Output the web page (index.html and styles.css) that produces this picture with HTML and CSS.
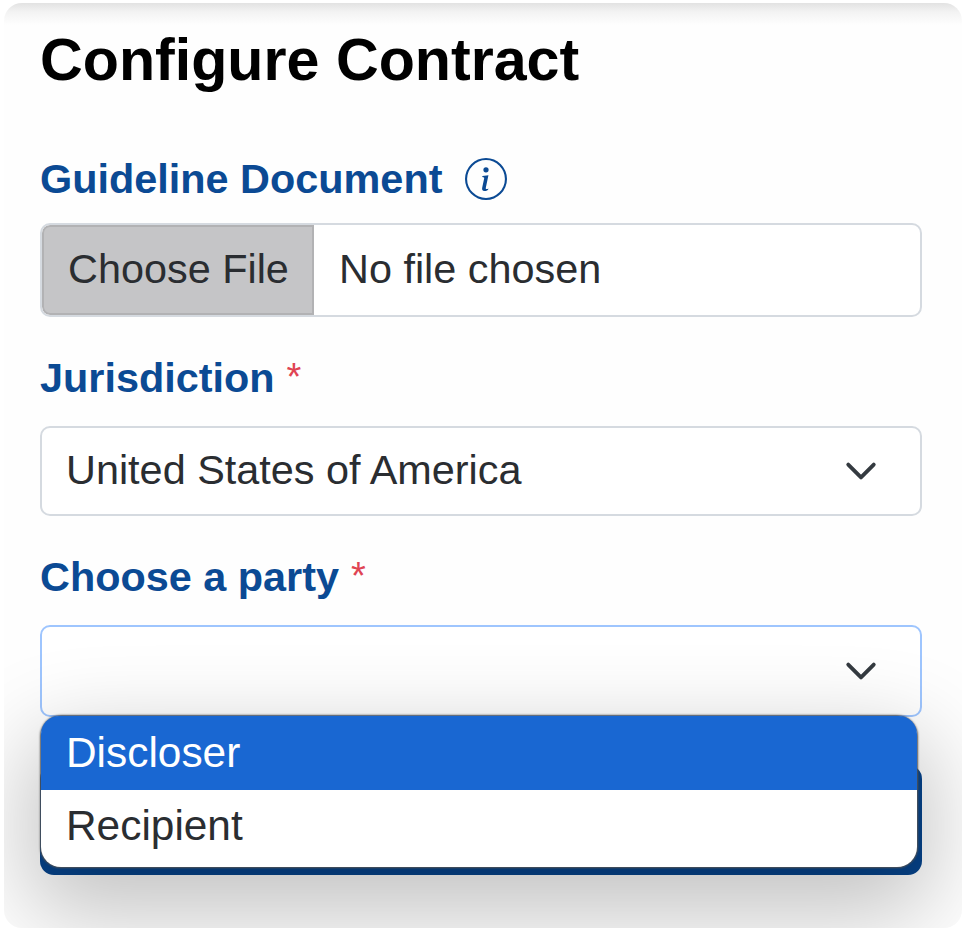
FILE: index.html
```html
<!DOCTYPE html>
<html lang="en">
<head>
    <meta charset="UTF-8">
    <title>Configure Contract</title>
    <link rel="stylesheet" href="styles.css">
</head>
<body>
    <div class="card">
        <h1 class="title">Configure Contract</h1>

        <div class="label">
            <span>Guideline Document</span>
            <svg class="info" viewBox="0 0 16 16" fill="currentColor">
                <path d="M8 15.200A7.200 7.200 0 1 1 8 .8a7.200 7.200 0 0 1 0 14.400m0 .8A8 8 0 1 0 8 0a8 8 0 0 0 0 16"/>
                <path d="m8.930 6.588-2.290.287-.082.380.450.083c.294.070.352.176.288.469l-.738 3.468c-.194.897.105 1.319.808 1.319.545 0 1.178-.252 1.465-.598l.088-.416c-.200.176-.492.246-.686.246-.275 0-.375-.193-.304-.533zM9 4.500a1 1 0 1 1-2 0 1 1 0 0 1 2 0"/>
            </svg>
        </div>
        <div class="field file">
            <span class="file-button">Choose File</span>
            <span class="file-name">No file chosen</span>
        </div>

        <div class="label"><span>Jurisdiction</span><span class="required">*</span></div>
        <div class="field select">
            <span class="value">United States of America</span>
            <svg class="chevron" viewBox="0 0 16 16"><path d="m2 5 6 6 6-6"/></svg>
        </div>

        <div class="label"><span>Choose a party</span><span class="required">*</span></div>
        <div class="field select open">
            <span class="value"></span>
            <svg class="chevron" viewBox="0 0 16 16"><path d="m2 5 6 6 6-6"/></svg>
            <div class="menu">
                <div class="option selected">Discloser</div>
                <div class="option">Recipient</div>
            </div>
        </div>

        <div class="submit"></div>
    </div>
</body>
</html>
```
FILE: styles.css
```css
* {
    box-sizing: border-box;
}
body {
    margin: 0;
    padding: 3px 8px 2px 4px;
    height: 930px;
    background-color: #fff;
    font-family: "Liberation Sans", Arial, sans-serif;
    font-size: 41.4px;
    color: #2a2d31;
    overflow: hidden;
}
.card {
    height: 925px;
    padding: 22px 40px 0 36px;
    border-radius: 18px;
    background: linear-gradient(#e2e2e2, #f3f3f3 9px, #fefefe 22px);
    overflow: hidden;
}
.title {
    height: 70px;
    margin: 0 0 59px;
    font-size: 59.2px;
    line-height: 69px;
    color: #000;
    white-space: nowrap;
}
.label {
    display: flex;
    align-items: center;
    height: 50px;
    line-height: 50px;
    font-weight: bold;
    color: #0b4a94;
}
.required {
    height: 50px;
    margin-left: 12px;
    font-size: 38px;
    line-height: 48px;
    font-weight: normal;
    color: #e04453;
}
.info {
    width: 42px;
    height: 42px;
    margin-left: 23px;
}
.field {
    display: flex;
    align-items: center;
    border: 2px solid #d5dae0;
    border-radius: 10px;
    background-color: #fff;
}
.file {
    height: 94px;
    margin: 19px 0 36px;
    overflow: hidden;
}
.file-button {
    width: 272px;
    height: 90px;
    padding-left: 24px;
    border: 2px solid #b2b2b4;
    border-radius: 8px 0 0 8px;
    background-color: #c5c5c7;
    line-height: 84px;
}
.file-name {
    height: 90px;
    margin-left: 25px;
    line-height: 88px;
}
.select {
    position: relative;
    height: 90px;
    margin: 23px 0 36px;
    padding: 0 42px 0 24px;
    justify-content: space-between;
}
.value {
    height: 50px;
    line-height: 49px;
}
.select.open {
    height: 92px;
    margin: 23px 0 48px;
    border-color: #9ec5fe;
}
.chevron {
    width: 34px;
    height: 34px;
    fill: none;
    stroke: #343a40;
    stroke-width: 1.8;
    stroke-linecap: round;
    stroke-linejoin: round;
}
.menu {
    position: absolute;
    top: 89px;
    left: -1px;
    width: 876px;
    height: 151px;
    border-radius: 20px;
    background-color: #fff;
    box-shadow: 0 0 2px 1px #555, 0 34px 90px 14px rgba(0, 0, 0, 0.23);
}
.option {
    height: 75px;
    padding-left: 25px;
    font-size: 42.4px;
    line-height: 72px;
}
.option.selected {
    height: 74px;
    border-radius: 18px 18px 0 0;
    background-color: #1967d2;
    line-height: 73px;
    color: #fff;
}
.submit {
    height: 110px;
    border-radius: 14px;
    background-color: #06448c;
}
```
